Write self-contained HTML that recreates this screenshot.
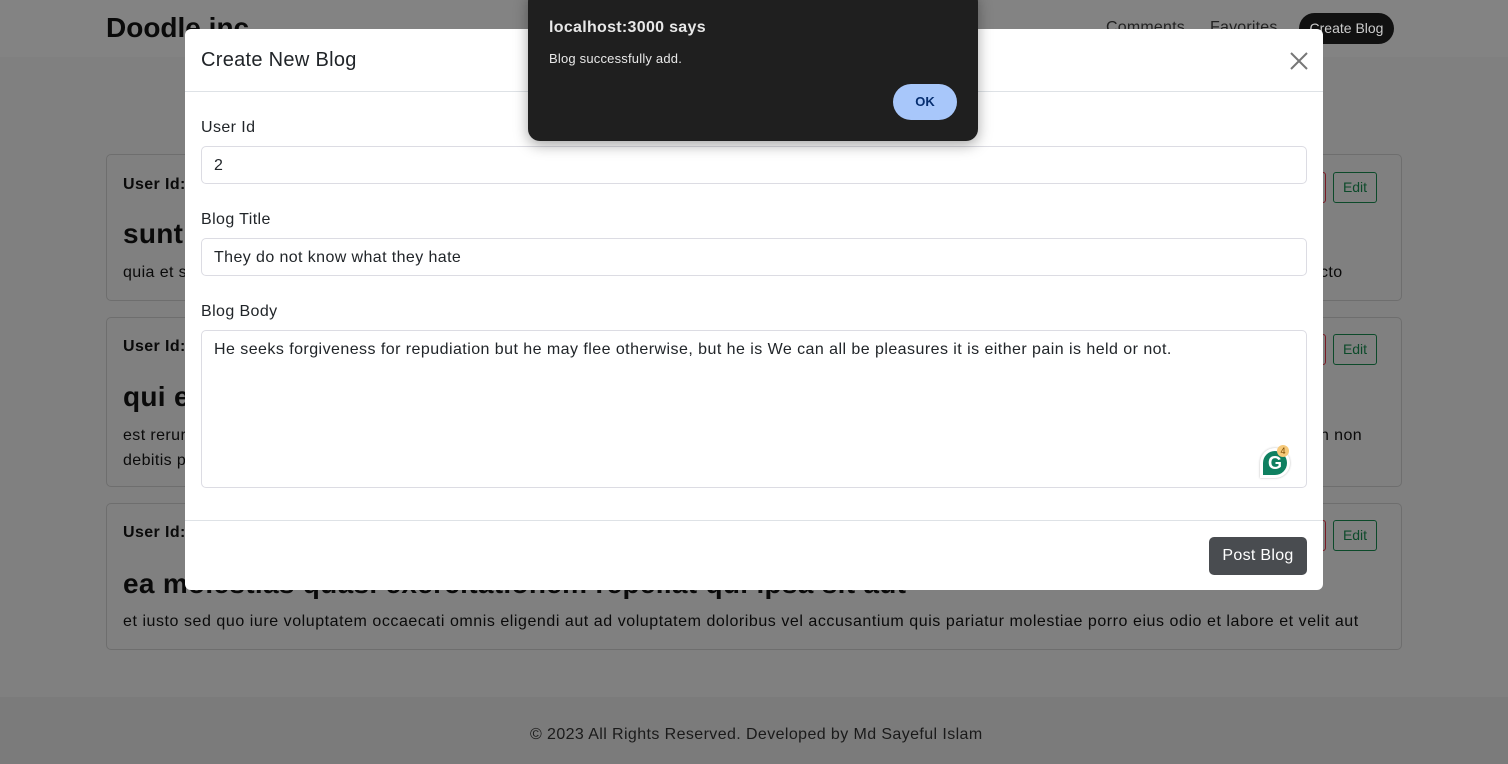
<!DOCTYPE html>
<html><head><meta charset="utf-8"><style>
*{box-sizing:border-box;margin:0;padding:0}
body{width:1508px;height:764px;overflow:hidden;background:#808080;font-family:"Liberation Sans",sans-serif;position:relative;color:#0a0a0a;letter-spacing:0.4px}
.a{position:absolute;white-space:nowrap}
.card{position:absolute;left:106px;width:1296px;border:1px solid #6e6e6e;border-radius:5px}
.uid{font-weight:bold;font-size:16px}
.h{font-size:28px;font-weight:bold;letter-spacing:0.3px}
.p{font-size:16px}
.edit{position:absolute;left:1226px;width:44px;height:31px;border:1px solid #0c4a2a;border-radius:3px;color:#0c4a2a;font-size:14px;text-align:center;line-height:29px;letter-spacing:0}
.del{position:absolute;left:1180px;width:39px;height:31px;border:1px solid #7a1a25;border-radius:3px}
.modal{position:absolute;left:185px;top:29px;width:1138px;height:561px;background:#fff;border-radius:6px;overflow:hidden}
.lbl{position:absolute;left:16px;font-size:16px;color:#212529}
.inp{position:absolute;left:16px;width:1106px;border:1px solid #dcdce3;border-radius:5px;font-size:16px;color:#212529;padding:0 12px}
</style></head><body>
<div class="a" style="left:0;top:0;width:1508px;height:57px;background:#838383"></div>
<div class="a" style="left:106px;top:12px;font-size:28px;font-weight:bold;letter-spacing:0">Doodle inc</div>
<div class="a" style="left:1106px;top:19px;font-size:16px;color:#222;letter-spacing:0.2px">Comments</div>
<div class="a" style="left:1210px;top:19px;font-size:16px;color:#222;letter-spacing:0.2px">Favorites</div>
<div class="a" style="left:1299px;top:13px;width:95px;height:31px;background:#111;border-radius:16px;color:#ccc;font-size:14px;line-height:31px;text-align:center;letter-spacing:0">Create Blog</div>

<div class="card" style="top:154px;height:147px">
 <div class="a uid" style="left:16px;top:21px">User Id:</div>
 <div class="a h" style="left:16px;top:63px">sunt</div>
 <div class="a p" style="left:16px;top:109px">quia et s</div>
 <div class="a p" style="left:1213px;top:109px">cto</div>
 <div class="del" style="top:17px"></div><div class="edit" style="top:17px">Edit</div>
</div>
<div class="card" style="top:317px;height:170px">
 <div class="a uid" style="left:16px;top:20px">User Id:</div>
 <div class="a h" style="left:16px;top:63px">qui e</div>
 <div class="a p" style="left:16px;top:109px">est rerur</div>
 <div class="a p" style="left:16px;top:134px">debitis p</div>
 <div class="a p" style="left:1213px;top:109px">n non</div>
 <div class="del" style="top:16px"></div><div class="edit" style="top:16px">Edit</div>
</div>
<div class="card" style="top:503px;height:147px">
 <div class="a uid" style="left:16px;top:20px">User Id:</div>
 <div class="a h" style="left:16px;top:64px">ea molestias quasi exercitationem repellat qui ipsa sit aut</div>
 <div class="a p" style="left:16px;top:109px;letter-spacing:0.55px">et iusto sed quo iure voluptatem occaecati omnis eligendi aut ad voluptatem doloribus vel accusantium quis pariatur molestiae porro eius odio et labore et velit aut</div>
 <div class="del" style="top:16px"></div><div class="edit" style="top:16px">Edit</div>
</div>
<div class="a" style="left:0;top:697px;width:1508px;height:67px;background:#7b7b7b"></div>
<div class="a" style="left:530px;top:726px;font-size:16px;color:#1a1a1a">© 2023 All Rights Reserved. Developed by Md Sayeful Islam</div>

<div class="modal">
 <div class="a" style="left:16px;top:20px;font-size:20px;color:#212529;letter-spacing:0.3px">Create New Blog</div>
 <svg class="a" style="left:1104px;top:22px" width="20" height="20" viewBox="0 0 20 20"><path d="M2 2L18 18M18 2L2 18" stroke="#777" stroke-width="2"/></svg>
 <div class="a" style="left:0;top:62px;width:1138px;border-top:1px solid #dee2e6"></div>
 <div class="lbl" style="top:90px">User Id</div>
 <div class="inp" style="top:117px;height:38px;line-height:38px">2</div>
 <div class="lbl" style="top:182px">Blog Title</div>
 <div class="inp" style="top:209px;height:38px;line-height:38px">They do not know what they hate</div>
 <div class="lbl" style="top:274px">Blog Body</div>
 <div class="inp" style="top:301px;height:158px;padding-top:10px;letter-spacing:0.45px">He seeks forgiveness for repudiation but he may flee otherwise, but he is We can all be pleasures it is either pain is held or not.</div>
 <div class="a" style="left:1075px;top:419px;width:30px;height:30px;border-radius:50% 50% 50% 0;background:#fff;box-shadow:0 0 2px #bbb"></div>
 <div class="a" style="left:1078px;top:422px;width:24px;height:24px;border-radius:50% 50% 50% 0;background:#0f8060;color:#fff;font-weight:bold;font-size:18px;text-align:center;line-height:24px;letter-spacing:0">G</div>
 <div class="a" style="left:1092px;top:416px;width:12px;height:12px;border-radius:50%;background:#f6c97a;font-size:9px;text-align:center;line-height:12px;color:#7a4a00;letter-spacing:0">4</div>
 <div class="a" style="left:0;top:491px;width:1138px;border-top:1px solid #dee2e6"></div>
 <div class="a" style="left:1024px;top:508px;width:98px;height:38px;background:#494c50;border-radius:5px;color:#fff;font-size:16px;text-align:center;line-height:38px;letter-spacing:0.3px">Post Blog</div>
</div>

<div class="a" style="left:528px;top:-10px;width:450px;height:151px;background:#1f1f1f;border-radius:12px;box-shadow:0 4px 14px rgba(0,0,0,.35)"></div>
<div class="a" style="left:549px;top:19px;font-size:16px;font-weight:bold;color:#e8e8e8;letter-spacing:0.3px">localhost:3000 says</div>
<div class="a" style="left:549px;top:51px;font-size:13px;color:#e8e8e8;letter-spacing:0.2px">Blog successfully add.</div>
<div class="a" style="left:893px;top:84px;width:64px;height:36px;border-radius:18px;background:#a8c7fa;color:#062e6f;font-size:13px;font-weight:bold;text-align:center;line-height:36px;letter-spacing:0">OK</div>
</body></html>
